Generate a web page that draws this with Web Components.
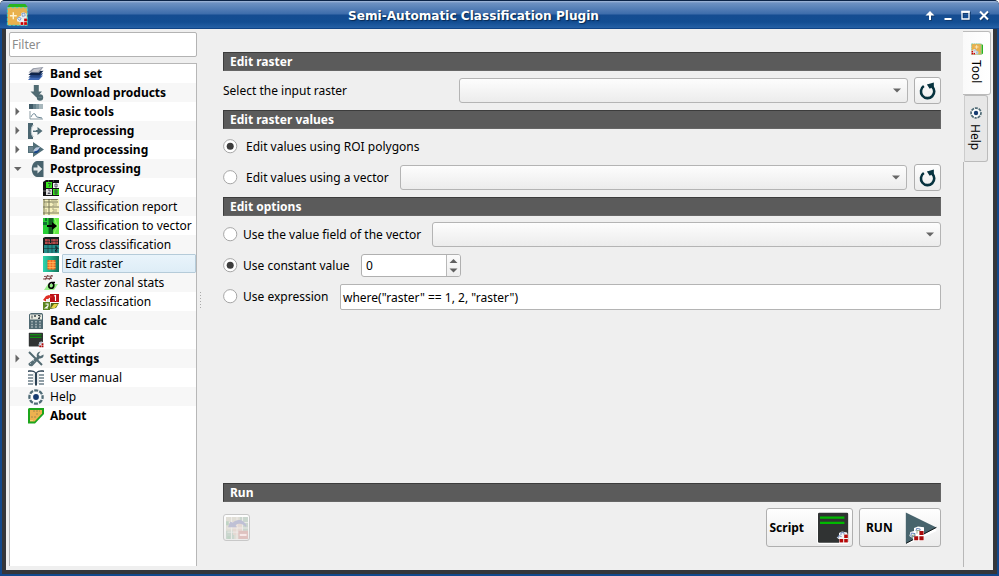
<!DOCTYPE html>
<html lang="en">
<head>
<meta charset="utf-8">
<title>Semi-Automatic Classification Plugin</title>
<style>
html,body{margin:0;width:999px;height:576px;overflow:hidden}
body{font:12px/19px "Noto Sans",sans-serif;color:#000;background:#fff}
</style>
</head>
<body>
<plugin-window></plugin-window>
<script>
const cells = '<g fill="#b50808"><rect x="11.300" y="13.500" width="1.800" height="1.700"/><rect x="13.600" y="13.500" width="1.800" height="1.700"/><rect x="13.600" y="11.300" width="1.800" height="1.700"/></g>';
const icons = {
  logo: '<path d="M1 2.200 2.500 0h11.500l1.800 2.200z" fill="#28b51f"/><path d="M1 2.200h14.500V15.500H1z" fill="#e9b14d"/><path d="M1 2.700h14.500V15.500H1z" fill="none" stroke="#3ad6cc" stroke-width=".7" stroke-dasharray="2 1"/><path d="M2.800 8.500h5M5.300 6v5" stroke="#fff3d0" stroke-width="1"/><path d="m8 10.500 1.500-1.500 1.500-.5v-2L13 6l2 1v8.500h-5V13l-2-.5z" fill="#e9edf2"/><path d="M8.500 10.500l1-1 1.500 1-1 1.500zM11.500 7l2-.5.500 2-2 .500z" fill="none" stroke="#6c8fc0" stroke-width=".6"/><rect x="10.600" y="13.200" width="2" height="2" fill="#c00"/><rect x="13.200" y="13.200" width="2" height="2" fill="#c00"/><rect x="13.200" y="10.600" width="2" height="2" fill="#c00"/>',
  bands: '<path d="M0 14 3.500 10 15 9.500 11 14z" fill="#4069b5"/><path d="M.3 11.500 3.500 8 15.200 7.300 11.500 11.700z" fill="#254785"/><path d="M.3 9 4 5.500 15.500 4.800 11.500 9.300z" fill="#10254a"/><path d="M.5 6.500 5 2.200 15.500 1 11 6.700z" fill="#8f95a3"/><path d="M3 5.700 6 2.900 13.500 2 10 5.700z" fill="#c4c5cc"/>',
  download: '<path d="M5.800 0h5v6.500H14L8.500 12.500 2.500 6.500h3.300z" fill="#506b73"/><circle cx="12" cy="12.500" r="3.200" fill="#4c6870"/><path d="M10 12.300h4" stroke="#667f87"/>',
  tools: '<path d="M1 0h14v5H1z" fill="#405b68"/><path d="M5 0h3v5H5z" fill="#66818b"/><path d="M8 0h3v5H8z" fill="#8199a1"/><path d="M11 0h4v5h-4z" fill="#a9b8bd"/><path d="M2 7v8h13" fill="none" stroke="#8a9ba3"/><path d="M3 13c1-2 2-4 4-3 1 1 1 3 2 3l5 1" fill="none" stroke="#668291"/>',
  pre: '<path d="M0 0h5v2C2.300 4 2.300 12 5 14v2H0z" fill="#4a6570"/><path d="M5.500 2C2.500 4.500 2.500 11.500 5.500 14" stroke="#b2c0c6" fill="none"/><path d="M5 7h4.500V4L14.500 8l-5 4V9H5z" fill="#526d77"/><path d="M5 7.500h3" stroke="#adbbc0"/>',
  band: '<path d="M0 4h5V0l11 7.500L5 15v-4H0z" fill="#526f79"/><path d="M1 5h4v5H1z" fill="#6b838e"/><path d="M6 7.500 8 5.500l4-.500-2 3.500-2 1H5z" fill="#b9c8df"/><path d="M6.500 9.500 9.500 8.500 12 6l-1 3-2 2H6z" fill="#164489"/>',
  post: '<path d="M15.500 0H9C2 1 2 15 9 16h6.500z" fill="#48636d"/><path d="M5.500 6.600h4V3.600L14.300 8l-4.800 4.400V9.500h-4z" fill="#e5eaeb"/>',
  accuracy: '<path d="M0 2 3 0h13v16H0z" fill="#111"/><path d="M3 2h6v6H3z" fill="#39e71c"/><path d="M10 3h6v5h-6z" fill="#f5f5f5"/><path d="M3 9h6v6H3z" fill="#ddd"/><path d="M10 9h6v6h-6z" fill="#39e71c"/><path d="M5 3.500h2.500L6 7M5 10h2v1.500L5 13.500h2.500M12 4h2v3h-2zM12 10h2v4h-2zM12 12h2" fill="none" stroke="#334" stroke-width=".8"/><path d="M0 11h3M5 1h1M10 1h1" stroke="#777"/>',
  report: '<path d="M0 0h16v16H0z" fill="#f5f0bd"/><path d="M1 3h14M0 8h16M0 14h16M6 0v16M1 0v16" stroke="#777758"/><path d="M3 4v3M3 10v3M9 4h2v3H9M13 4v3M9 10h2v3H9M13 10v3M8 1h6" stroke="#aaa881" fill="none"/><path d="M0 0h15" stroke="#302e1c"/>',
  vector: '<path d="M0 0h16v16H0z" fill="#169d2d"/><path d="M0 0h5v16H0z" fill="#26ce35"/><path d="M2 0h2v3H2zM0 4h4v3H0z" fill="#0d7430"/><path d="M11 0h5v16h-6z" fill="#62ed42"/><path d="M6 0h4v16H6z" fill="#12601e"/><path d="M11 0c3 4 1 5 4 8-3 4-3 5-4 8" fill="none" stroke="#b5f6a0" stroke-width=".6"/><path d="M4 7h5V4l5 4-5 4V9H4z" fill="#000"/>',
  cross: '<path d="M0 1 2 0h14v16H0z" fill="#182020"/><path d="M2 2h13v5H2z" fill="#b74a4b"/><path d="M1 8h15v8H1z" fill="#238b89"/><path d="M1 4.500h15M1 11.500h15M5 0v16M9 0v16M13 0v16" stroke="#182020" stroke-width=".5"/><path d="M6 2l1.500-.5V6M12 10h2v2l-2 2h2.500" fill="none" stroke="#102126"/>',
  edit: '<defs><linearGradient id="g"><stop stop-color="#2dd6ae"/><stop offset="1" stop-color="#137259"/></linearGradient></defs><path d="M0 0h16v16H0z" fill="url(#g)"/><path d="M4.500 4h8v9.500h-8z" fill="#f26a20"/><path d="M4.500 6.500h8M4.500 9h8M4.500 11.500h8M7 4v9.500M10 4v9.500" stroke="#ffbd5d" stroke-width=".8"/>',
  zonal: '<path d="M2 5 5 0M6 5 9 0M1 1.500l9-.5M0 4l9-.7" stroke="#865052" stroke-width="1.200"/><path d="M5 9h10l-4 6H1z" fill="#99ee88"/><path d="M12 7.500H8.500C5 8 5 13 8 13.200s4-4.200 1-5.500" fill="none" stroke="#000" stroke-width="1.600"/>',
  reclass: '<path d="M7 0h9v8H7z" fill="#bd1117"/><path d="M0 6 3 2l3-1 4 2-4 1-2 4z" fill="#df2f25"/><path d="M3 5h4v3H3z" fill="#eee"/><path d="M0 8h7v8H0z" fill="#5c8420"/><path d="M8 9h8l-3 5-6 1z" fill="#53691a"/><path d="M11 10h4l-3 4H8z" fill="#e7d546"/><path d="m11 2 1.500-.5V7M2.500 10H5v2l-2.500 2H5" fill="none" stroke="#fff" stroke-width="1.100"/>',
  calc: '<path d="M1 1.500 3 0h11l1 1.500V16H1z" fill="#506972"/><path d="M2 1.500h12v5H2z" fill="#e7e9df"/><path d="M4 2.500v3M6 3h2M7 2v2M10 2.500h2v1.500l-2 1.500h2" fill="none" stroke="#29343a" stroke-width=".9"/><g fill="#9aa9ad"><path d="M3 8h2v1.500H3zM7 8h2v1.500H7zM11 8h2v1.500h-2zM3 10.700h2v1.500H3zM7 10.700h2v1.500H7zM11 10.700h2v1.500h-2zM3 13.300h2v1.500H3zM7 13.300h2v1.500H7zM11 13.300h2v1.500h-2z"/></g>',
  script: '<rect x=".8" y=".8" width="14.200" height="13.700" rx=".6" fill="#303333"/><path d="M2 2.800h11.500M2 5.300h11.500" stroke="#00b900" stroke-width=".9"/><path d="m10.500 13 1-3 2-.6 2 1v5H12z" fill="#dfe2e7"/><path d="m11 13 1-2 1.500-.5" fill="none" stroke="#7189ae" stroke-width=".6"/>'+cells,
  runscript: '<rect width="16" height="16" rx="1" fill="#fff"/><rect x=".5" y=".4" width="15.100" height="15" rx=".6" fill="#303333"/><path d="M1.500 2.800h12.200M1.500 5.400h12.200" stroke="#00b900" stroke-width="1.100"/><path d="m9.800 12.700 1.200-.7v-1.500l1.500-.8 2.500.5.500 1.500V15.500H11l.2-1.700z" fill="#f4f4f4"/><path d="m10.500 13 .3-1.200 1.500.5M12 11.500v-1.200h1.500v1" fill="none" stroke="#6885b8" stroke-width=".45"/>'+cells,
  settings: '<path d="M1 1 14 14" stroke="#526971" stroke-width="1.900"/><path d="M12.500.500 10.500 3.500l1.500 1.700 3.500-1.700c.5 3-1.700 4-4 4L4.500 15c-2 1-4.500-.5-4-2.500L9 6C8 3 10 .7 12.500.5z" fill="#566d75"/><path d="m2 12 1 1M5 9l1.500 1.500" stroke="#a7b6ba"/>',
  manual: '<path d="M0 .5c4-.7 6 0 8 2 2-2 4-2.700 8-2v1.500c-3-.7-6 0-7 1v12.500H7V3C6 2 3 1.300 0 2z" fill="#2d4254"/><path d="M0 5h5M0 8h5M0 11h5M0 14h5M11 5h5M11 8h5M11 11h5M11 14h5" stroke="#6e808a" stroke-width="1.300"/><path d="M6 3v11M10 3v11" stroke="#cad1d4"/>',
  help: '<circle cx="8" cy="8" r="6.600" fill="#f9fbfb" stroke="#506b76" stroke-width="2.300" stroke-dasharray="3.984 1.200" stroke-dashoffset="2"/><circle cx="8" cy="8" r="2.900" fill="#163b70"/>',
  about: '<path d="M0 1 1 0h15v6L7 15.500H0z" fill="#1da61c"/><path d="M2 2h12v3.500L6.500 13.500H2z" fill="#edb14f"/><path d="M5 3h7M3 9h5M8 6h2" stroke="#a68a4d" stroke-dasharray="2 1"/><path d="M2 12.500h3" stroke="#f7d277"/>',
  refresh: '<path d="M4.300 3.600A5.900 5.900 0 1 0 11.500 4" fill="none" stroke="#07333f" stroke-width="2.300"/><path d="M7 2.300 13.200.5v5.800L11.500 4.800 9.500 6z" fill="#07333f"/>',
  run: '<path d="m.3 15.800 15.200-7" stroke="#fff" stroke-width="1.500"/><path d="M.4.3v15.500L15.700 7.700z" fill="#47636c"/><path d="m.5 15.700 15.200-8" stroke="#101719" stroke-width=".5"/><path d="m2.200 12 .5-2 1.800-.5V8l2-.7 3 .3v6.900H4.300l-.5-1.500z" fill="#fff"/><path d="m2.900 12 .3-1.500 1.800.3-.3 1.500zM5.500 9.500l.3-1.300 1.800.3-.3 1" fill="none" stroke="#6886b9" stroke-width=".5"/><path d="M3.800 13v-1.500l1.500.2M6 10.800V9.200l1.500.2" stroke="#8ca27b" stroke-width=".45" fill="none"/><g fill="#a90b0b"><path d="M4.600 12.100h2v2h-2zM7.200 12.100h2.100v2H7.200zM7.200 9.500h2.100v2H7.200z"/></g>',
  undo: '<path d="M0 0h16v16H0z" fill="#e0ded6"/><path d="M10 0h6v10h-6zM0 10h6v6H0z" fill="#cad6ce"/><path d="M5 3h7v10H5z" fill="#e5d9d3"/><path d="M1 8h15M1 11h15M4 0v16M8 0v16M12 0v16M0 4h16" stroke="#f0eeeb" stroke-width=".6"/><path d="M0 3h2v3H0zM1 14h2v2H1z" fill="#c0d4c5"/><path d="M1.500 7.500 3 3.500l2 .5C8 1 13 1.500 15 6.500l-1 .5C12 4.500 9 4.500 7 6l1 1.500z" fill="#bfc0d5"/><path d="M9 10h7v6H9z" fill="#dfc2c0"/><path d="M10 12.300h5v1.500h-5z" fill="#f7e9e9"/>'
};
function define(name, html, setup) {
  customElements.define(name, class extends HTMLElement {
    constructor() {
      super();
      this.attachShadow({mode: 'open'}).innerHTML = html;
    }
    connectedCallback() { if (setup) setup(this, this.shadowRoot); }
  });
}
define('app-icon', '<style>:host{display:block;width:16px;height:16px;flex:none}svg{display:block;width:100%;height:100%}</style><svg viewBox="0 0 16 16"></svg>',
  (el, r) => r.querySelector('svg').innerHTML = icons[el.getAttribute('name')] || '');
define('tree-row', `<style>
:host{display:flex;height:19px;align-items:center;background:#fff;white-space:pre}
:host(:nth-child(even)){background:#f7f7f7}
.arrow{width:18px;height:9px;flex:none}
.arrow svg{display:block;margin-left:4px}
.label{margin-left:3px;padding-left:3px;height:19px;flex:1;box-sizing:border-box;line-height:19px}
:host([bold]) .label{font-weight:700;font-size:var(--bold-size,12px)}
:host([child]) .arrow{width:33px}
:host([selected]){background:#fff}
:host([selected]) .label{border:1px solid #b5cbd9;border-radius:1px;background:linear-gradient(#e9f4fb,#deedf7);padding-left:2px;line-height:17px}
</style><span class="arrow"></span><app-icon></app-icon><span class="label"><slot></slot></span>`, (el, r) => {
  const icon = document.createElement('app-icon');
  icon.setAttribute('name', el.getAttribute('icon'));
  r.querySelector('app-icon').replaceWith(icon);
  const a = el.getAttribute('arrow');
  if (a) r.querySelector('.arrow').innerHTML = '<svg width="9" height="9"><path fill="#666" d="' + (a === 'open' ? 'M0 3h7.500L3.750 7z' : 'M1.500.5v8l4-4z') + '"/></svg>';
});
define('nav-panel', `<style>
:host{display:flex;flex-direction:column;width:188px;padding:3px 0 4px 3px;box-sizing:content-box}
.filter{height:25px;box-sizing:border-box;border:1px solid #b3b3b3;border-radius:2px;background:#fff;color:#8b8b8b;padding-left:2px;line-height:24px}
.tree{margin-top:6px;flex:1;border:1px solid #b7b7b7;border-bottom:0;background:#fff}
</style><div class="filter">Filter</div><div class="tree"><slot></slot></div>`);
define('section-bar', `<style>:host{display:block;height:19px;box-sizing:border-box;background:#5b5b5b;border:1px solid #666;border-top-color:#3c3c3c;border-left-color:#3c3c3c;color:#fff;font-weight:700;font-size:var(--bold-size);line-height:18px;padding-left:6px}</style><slot></slot>`);
define('combo-box', `<style>:host{display:flex;flex:1;height:25px;box-sizing:border-box;border:1px solid #b4b4b4;border-radius:3px;background:linear-gradient(#fdfdfd,#ececec);align-items:center;justify-content:flex-end;padding-right:6px}svg{display:block}</style><svg width="8" height="5"><path d="M0 .5h8L4 4.500z" fill="#666"/></svg>`);
define('push-button', `<style>:host{display:flex;box-sizing:border-box;border:1px solid #afafaf;border-radius:3px;background:linear-gradient(#fefefe,#ececec);align-items:center;justify-content:center;font-weight:700;font-size:var(--bold-size)}:host([disabled]){border-color:#c8c8c8}</style><slot></slot>`);
define('radio-option', `<style>:host{display:flex;align-items:center;white-space:nowrap}svg{display:block;flex:none;margin-right:var(--gap,5px)}circle.dot{display:none}:host([checked]) .dot{display:block}</style><svg width="15" height="15"><circle cx="7.200" cy="7.200" r="6.600" fill="#fff" stroke="#a6a6a6"/><circle class="dot" cx="7.200" cy="7.200" r="3.500" fill="#3d3d3d"/></svg><slot></slot>`);
define('spin-box', `<style>:host{display:flex;width:100px;height:23px;box-sizing:border-box;border:1px solid #b0b0b0;border-radius:3px;background:#fff;overflow:hidden}span{flex:1;padding-left:4px;line-height:22px}div{width:13px;border-left:1px solid #b8b8b8;background:linear-gradient(#fbfbfb,#eee)}svg{display:block}</style><span><slot></slot></span><div><svg width="13" height="21"><path d="M2.500 8h8l-4-4zM2.500 13.500h8l-4 4z" fill="#606060"/></svg></div>`);
define('text-field', `<style>:host{display:block;flex:1;height:26px;box-sizing:border-box;border:1px solid #b4b4b4;border-radius:2px;background:#fff;line-height:25px;padding-left:2px;font-size:var(--field-size,12px)}</style><slot></slot>`);
define('side-tab', `<style>:host{display:flex;box-sizing:border-box;flex-direction:column;align-items:center;width:24px;height:67px;border:1px solid #bbb;border-left-color:#ccc;border-radius:0 3px 3px 0;background:#e7e7e7;padding-top:11px;gap:5px;margin-left:1px}
:host([active]){width:28px;height:64px;margin-left:0;background:linear-gradient(90deg,#fafafa,#fff);border-left:0;padding-top:11px}
app-icon{width:12px;height:12px}.text{writing-mode:vertical-rl;line-height:18px;margin-right:2px}.turn{transform:rotate(90deg)}</style><app-icon class="turn"></app-icon><span class="text"><slot></slot></span>`, (el, r) => {
  const n = document.createElement('app-icon'); n.className = 'turn'; n.setAttribute('name', el.getAttribute('icon')); r.querySelector('app-icon').replaceWith(n);
});
define('title-bar', `<style>:host{display:flex;align-items:center;height:29px;box-sizing:border-box;border-top:1px solid #0b2347;border-bottom:1px solid #104486;background:linear-gradient(#a6bbdb 0,#6d91c2 2px,#3d6cab 13px,#154c91 14px,#124d92 21px,#2864a9 28px);border-radius:4px 4px 0 0;padding:0 10px 0 6px;color:#fff}
app-icon{width:22px;height:22px}.title{flex:1;text-align:center;font:bold 12.100px "DejaVu Sans",sans-serif;text-shadow:1px 1px 1px #092951;padding:2px 4px 0 0}svg{display:block;filter:drop-shadow(1px 1px 0 #123a6d)}</style>
<app-icon name="logo"></app-icon><span class="title"><slot></slot></span><svg width="66" height="14" fill="none" stroke="#fff" stroke-width="2"><path d="M7 12V5"/><path d="M2.500 7.500 7 3l4.500 4.500z" fill="#fff" stroke="none"/><path d="M21.500 11h7"/><path d="M39 4h7v7h-7z" stroke-width="1.300"/><path d="M38.300 3.700h8.500"/><path d="m57 3.500 8 8m0-8-8 8"/></svg>`);
define('edit-form', `<style>
:host{display:flex;flex-direction:column;width:718px;padding-top:23px;box-sizing:border-box}
.row{display:flex;align-items:center;box-sizing:border-box}
.refresh{width:27px;height:27px;margin-left:6px}.refresh app-icon{width:18px;height:18px}
.values{--gap:8px}.wide{margin-left:7px}
.spacer{flex:1}
.footer{height:39px;margin:6px 0 23px;gap:6px}
</style>
<section-bar>Edit raster</section-bar>
<div class="row" style="height:39px"><span style="width:236px">Select the input raster</span><combo-box></combo-box><push-button class="refresh"><app-icon name="refresh"></app-icon></push-button></div>
<section-bar>Edit raster values</section-bar>
<div class="row values" style="height:35px"><radio-option checked>Edit values using ROI polygons</radio-option></div>
<div class="row values" style="height:27px"><radio-option style="width:177px">Edit values using a vector</radio-option><combo-box></combo-box><push-button class="refresh wide"><app-icon name="refresh"></app-icon></push-button></div>
<section-bar style="margin-top:6px">Edit options</section-bar>
<div class="row" style="height:37px"><radio-option style="width:209px">Use the value field of the vector</radio-option><combo-box></combo-box></div>
<div class="row" style="height:25px"><radio-option checked style="width:138px">Use constant value</radio-option><spin-box>0</spin-box></div>
<div class="row" style="height:26px;margin-top:6px"><radio-option style="width:117px;height:24px;align-self:flex-start">Use expression</radio-option><text-field>where("raster" == 1, 2, "raster")</text-field></div>
<div class="spacer"></div>
<section-bar>Run</section-bar>
<div class="row footer"><push-button disabled style="width:27px;height:27px"><app-icon name="undo" style="width:22px;height:22px"></app-icon></push-button><div class="spacer"></div>
<push-button style="width:87px;height:39px;justify-content:space-between;padding:0 3px 0 2.500px">Script<app-icon name="runscript" style="width:32px;height:32px"></app-icon></push-button><push-button style="width:82px;height:39px;justify-content:space-between;padding:0 3px 0 6px">RUN<app-icon name="run" style="width:32px;height:32px"></app-icon></push-button></div>`);
define('plugin-window', `<style>
:host{display:flex;flex-direction:column;width:999px;height:576px;--bold-size:12px;--field-size:12px;background:#34363a;border-radius:5px 5px 0 0;overflow:hidden}
.frame{display:flex;height:547px;box-sizing:border-box;border:solid #12488b;border-width:0 2px 2px;padding:0 4px 4px;background:#34363a}
.content{display:flex;background:#efefef;width:987px;height:541px}
.split{display:flex;flex-direction:column;gap:2px;justify-content:center;align-items:center;width:7px;margin-right:19px}
.split i{width:1px;height:1px;background:#aaa}
.tabs{display:flex;flex-direction:column;width:30px;margin-left:22px;padding:2px 0 3px}
.line{flex:1;border-left:1px solid #b8b8b8}
</style><title-bar>Semi-Automatic Classification Plugin</title-bar>
<div class="frame"><div class="content"><nav-panel>
<tree-row bold icon="bands">Band set</tree-row><tree-row bold icon="download">Download products</tree-row><tree-row bold icon="tools" arrow="closed">Basic tools</tree-row><tree-row bold icon="pre" arrow="closed">Preprocessing</tree-row><tree-row bold icon="band" arrow="closed">Band processing</tree-row><tree-row bold icon="post" arrow="open">Postprocessing</tree-row>
<tree-row child icon="accuracy">Accuracy</tree-row><tree-row child icon="report">Classification report</tree-row><tree-row child icon="vector">Classification to vector</tree-row><tree-row child icon="cross">Cross classification</tree-row><tree-row child selected icon="edit">Edit raster</tree-row><tree-row child icon="zonal">Raster zonal stats</tree-row><tree-row child icon="reclass">Reclassification</tree-row>
<tree-row bold icon="calc">Band calc</tree-row><tree-row bold icon="script">Script</tree-row><tree-row bold icon="settings" arrow="closed">Settings</tree-row><tree-row icon="manual">User manual</tree-row><tree-row icon="help">Help</tree-row><tree-row bold icon="about">About</tree-row>
</nav-panel><div class="split"><i></i><i></i><i></i><i></i><i></i><i></i></div><edit-form></edit-form><div class="tabs"><side-tab active icon="logo">Tool</side-tab><side-tab icon="help">Help</side-tab><div class="line"></div></div></div></div>`);
</script>
</body>
</html>
